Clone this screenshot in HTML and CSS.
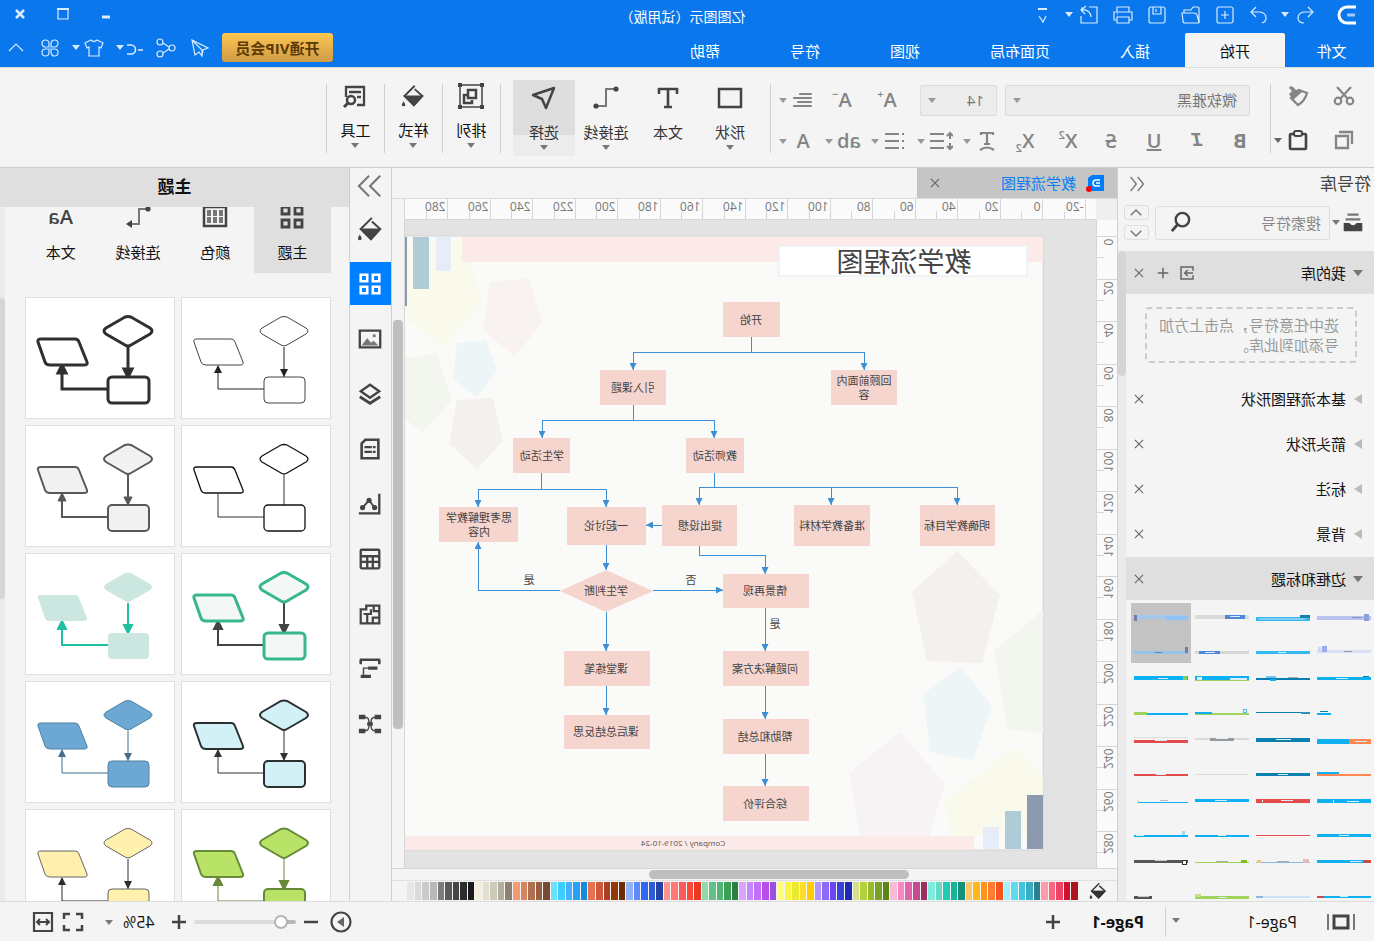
FILE: index.html
```html
<!DOCTYPE html>
<html lang="zh-CN">
<head>
<meta charset="utf-8">
<title>亿图图示</title>
<link rel="stylesheet" href="styles.css">
</head>
<body>
<svg class="defs" aria-hidden="true">
  <symbol id="caret" viewBox="0 0 8 5"><path d="M0 0h8L4 5z" fill="currentColor"/></symbol>
  <symbol id="undo" viewBox="0 0 24 24"><path d="M9 4 4 9l5 5M4 9h9q6 1 6 6t-6 5"/></symbol>
  <symbol id="redo" viewBox="0 0 24 24"><path d="M15 4l5 5-5 5M20 9h-9q-6 1-6 6 0 4 4 5"/></symbol>
  <symbol id="new" viewBox="0 0 24 24"><rect x="4" y="4" width="16" height="16" rx="2"/><path d="M12 8v8M8 12h8"/></symbol>
  <symbol id="open" viewBox="0 0 24 24"><path d="M4 18V6q0-2 2-2h4l2 3h7v3M4 19l2-7q1-2 3-2h12l-1 8q0 2-2 2H5q-2 0-1-3"/></symbol>
  <symbol id="save" viewBox="0 0 24 24"><rect x="4" y="4" width="16" height="16" rx="2"/><path d="M8 4v7h8V4M13 6v3"/></symbol>
  <symbol id="print" viewBox="0 0 24 24"><path d="M6 9V4h12v5M6 17H3V9h18v8h-3M6 14h12v6H6zM17 11h1"/></symbol>
  <symbol id="export" viewBox="0 0 24 24"><path d="M12 4H4v16h16v-7M20 5h-4M10 14q1-8 9-7M15 3l5 4-4 4"/></symbol>
  <symbol id="more" viewBox="0 0 24 24"><path d="M8 6h9" stroke-width="2"/><path d="M9 13l3 6 4-6"/></symbol>
  <symbol id="send" viewBox="0 0 24 24"><path d="M20 4 4 12l5 2 1 6 3-4 4 3zM10 19v-5L19 5"/></symbol>
  <symbol id="share" viewBox="0 0 24 24"><circle cx="6" cy="12" r="3"/><circle cx="18" cy="6" r="3"/><circle cx="18" cy="18" r="3"/><path d="M9 11l6-4M9 13l6 4"/></symbol>
  <symbol id="link" viewBox="0 0 18 24"><path d="M1 14h5M17 9h-4a4 4 0 0 0 0 9h4" stroke-width="1.600"/></symbol>
  <symbol id="shirt" viewBox="0 0 24 24"><path d="M9 4q3 3 6 0l6 3-2 5-2-1v9H7v-9l-2 1-2-5z"/></symbol>
  <symbol id="clover" viewBox="0 0 24 24"><path d="M11 11H7.500a3.500 3.500 0 1 1 3.500-3.500zM13 11V7.500a3.500 3.500 0 1 1 3.500 3.500zM11 13v3.500A3.500 3.500 0 1 1 7.500 13zM13 13h3.500a3.500 3.500 0 1 1-3.500 3.500z"/></symbol>
  <symbol id="up" viewBox="0 0 24 24"><path d="M5 15l7-7 7 7"/></symbol>
  <symbol id="down" viewBox="0 0 24 24"><path d="M5 9l7 7 7-7"/></symbol>
  <symbol id="close" viewBox="0 0 24 24"><path d="M5 5l14 14M19 5 5 19"/></symbol>
  <symbol id="plus" viewBox="0 0 24 24"><path d="M12 5v14M5 12h14"/></symbol>
  <symbol id="minus" viewBox="0 0 24 24"><path d="M5 12h14"/></symbol>
  <symbol id="cut" viewBox="0 0 24 24"><g stroke-width="2.200"><path d="M5 3l11 12M19 3 8 15"/><circle cx="6" cy="17" r="3.300"/><circle cx="18" cy="17" r="3.300"/></g></symbol>
  <symbol id="brush" viewBox="0 0 24 24"><path d="M3 9l8-3 8 8-7 7q-7-4-9-12z" stroke-width="2.300"/><path d="M8 8l9 8 4-6-3-3 3-3q-1-3-4-1l-3 3-3-1z" fill="currentColor" stroke="none"/></symbol>
  <symbol id="copy" viewBox="0 0 24 24"><path d="M8 8h12v12H8zM4 16V4h13" stroke-width="2.300"/></symbol>
  <symbol id="paste" viewBox="0 0 24 24"><rect x="4" y="6" width="16" height="15" rx="1" stroke-width="2.600"/><rect x="8" y="3" width="8" height="5" rx="2" fill="#f4f4f4" stroke-width="2"/></symbol>
  <symbol id="align" viewBox="0 0 24 24"><path d="M4 6h11M4 10h17M4 14h13M4 18h17" stroke-width="2.200" stroke-linecap="round"/></symbol>
  <symbol id="tarc" viewBox="0 0 24 24"><path d="M6 6V4h12v2M12 4v11M9 15h6M5 21q7-5 14 0" stroke-width="2.200"/></symbol>
  <symbol id="spacing" viewBox="0 0 24 24"><path d="M3 4v6M0 7l3-3 3 3M3 20v-6M0 17l3 3 3-3M9 5h14M9 12h14M9 19h14" stroke-width="2"/></symbol>
  <symbol id="list" viewBox="0 0 24 24"><path d="M3 5h2M3 12h2M3 19h2M8 5h14M8 12h14M8 19h14" stroke-width="2.200"/></symbol>
  <symbol id="rect" viewBox="0 0 28 28"><path d="M3 5h22v18H3z" stroke-width="2.500"/></symbol>
  <symbol id="tee" viewBox="0 0 28 28"><path d="M5 10V5h18v5M14 5v18M10 23h8" stroke-width="2.600"/></symbol>
  <symbol id="connector" viewBox="0 0 28 28"><path d="M4 5h10v17h11" stroke="#777" stroke-width="2"/><circle cx="4" cy="5" r="2.600" fill="currentColor" stroke="none"/><circle cx="24" cy="22" r="2.600" fill="currentColor" stroke="none"/></symbol>
  <symbol id="pointer" viewBox="0 0 28 28"><path d="M4 4l21 7-9 4-4 9z" stroke-width="2.500" stroke-linejoin="round"/></symbol>
  <symbol id="arrange" viewBox="0 0 28 28"><path d="M3 3h22v22H3z" stroke-width="1.500"/><path d="M9 8h8v8H9zM18 13h3v8h-8v-3" stroke-width="2.500"/><path d="M1 1h4v4H1zM23 1h4v4h-4zM1 23h4v4H1zM23 23h4v4h-4z" fill="currentColor" stroke="none"/></symbol>
  <symbol id="bucket" viewBox="0 0 28 28"><path d="M12 2l12 12-11 11L3 14 12 6" stroke-width="2.200"/><path d="M3 14h21L13 25z" fill="currentColor"/><path d="M25 20q4 6 0 6t0-6z" fill="currentColor" stroke="none"/></symbol>
  <symbol id="tools" viewBox="0 0 28 28"><path d="M12 23H5V5h18v10M8 10h12M8 15h4" stroke-width="2.300"/><circle cx="18" cy="18" r="4" stroke-width="2.500"/><path d="M21 21l4 4" stroke-width="3"/></symbol>
  <symbol id="library" viewBox="0 0 28 28"><path d="M8 5h12M6 10h16" stroke="#777" stroke-width="2.500"/><path d="M4 14h6q4 5 8 0h6v9H4z" fill="currentColor" stroke="none"/></symbol>
  <symbol id="search" viewBox="0 0 24 24"><circle cx="10" cy="9" r="7" stroke-width="2.500"/><path d="M15 14l6 7" stroke-width="3"/></symbol>
  <symbol id="import" viewBox="0 0 24 24"><path d="M4 9V4h16v16H4v-5" stroke-width="2"/><path d="M4 12h11M11 8l4 4-4 4" stroke-width="2"/></symbol>
  <symbol id="dleft" viewBox="0 0 28 28"><path d="M13 4 5 14l8 10M23 4 15 14l8 10"/></symbol>
  <symbol id="dright" viewBox="0 0 28 28"><path d="M3 3l11 11L3 25M15 3l11 11-11 11"/></symbol>
  <symbol id="grid" viewBox="0 0 28 28"><path d="M4 4h7v7H4zM17 9V4h7v7h-7V8M4 17h7v7H4zM17 17h7v7h-7z" stroke-width="2.800"/></symbol>
  <symbol id="picture" viewBox="0 0 28 28"><path d="M3 5h22v18H3z" stroke-width="2.500"/><path d="M5 21l5-5 3 2 4-5 6 8z" fill="#777" stroke="none"/><path d="M8 9h3v3H8z" fill="#777" stroke="none"/></symbol>
  <symbol id="layers" viewBox="0 0 28 28"><path d="M14 4l10 7-10 7-10-7z" stroke-width="2.500"/><path d="M3 17l11 7 11-7" stroke-width="3"/></symbol>
  <symbol id="doc" viewBox="0 0 28 28"><path d="M5 4h14l4 4v16H5z" stroke-width="2.800"/><path d="M8 12h3M12 12h8M8 17h3M12 17h8" stroke-width="2.400"/></symbol>
  <symbol id="chart" viewBox="0 0 28 28"><path d="M4 3v21h22" stroke-width="2.500"/><path d="M9 18l6-8 7 8" stroke-width="2"/><g fill="currentColor" stroke="none"><circle cx="9" cy="18" r="2.800"/><circle cx="15" cy="10" r="2.800"/><circle cx="22" cy="18" r="2.800"/></g></symbol>
  <symbol id="table" viewBox="0 0 28 28"><rect x="4" y="4" width="20" height="20" rx="1" stroke-width="2.500"/><path d="M4 11h20M4 17h20M11 11v13M17 11v13" stroke-width="2.500"/></symbol>
  <symbol id="plan" viewBox="0 0 28 28"><path d="M4 5h14v4h6v15H4zM4 11h6V5M4 18h7v6M13 9v5h8M17 14v9" stroke-width="2.400"/></symbol>
  <symbol id="gantt" viewBox="0 0 28 28"><path d="M3 4h22M4 4v5M24 4v5" stroke-width="2.800"/><path d="M6 13h10M13 22h11" stroke-width="3.500"/><path d="M15 13h6v9" stroke-width="1.500"/></symbol>
  <symbol id="mind" viewBox="0 0 28 28"><path d="M7 7h3q3 0 3 7t-3 7H7M21 7h-3q-3 0-3 7t3 7h3" stroke-width="1.500"/><path d="M2 4h7v5H2zM19 4h7v5h-7zM2 19h7v5H2zM19 19h7v5h-7zM11 12h6v4h-6z" fill="currentColor" stroke="none"/></symbol>
  <symbol id="palette" viewBox="0 0 28 28"><path d="M3 4h22v19H3z" stroke-width="2.500"/><path d="M6 7h4v6H6zM12 7h4v6h-4zM18 7h4v6h-4zM6 14h4v6H6zM12 14h4v6h-4zM18 14h4v6h-4z" fill="#777" stroke="none"/></symbol>
  <symbol id="conarrow" viewBox="0 0 28 28"><path d="M4 6h9v15h7" stroke="#777" stroke-width="2"/><circle cx="4" cy="6" r="2.600" fill="currentColor" stroke="none"/><path d="M20 17l6 4-6 4z" fill="currentColor" stroke="none"/></symbol>
  <symbol id="pages" viewBox="0 0 28 24"><path d="M7 6h14v12H7z" stroke-width="3"/><path d="M1 4v16M27 4v16" stroke="#777" stroke-width="2"/></symbol>
  <symbol id="play" viewBox="0 0 24 24"><circle cx="12" cy="12" r="9.500" stroke-width="2.200"/><path d="M9 7l7 5-7 5z" fill="#666" stroke="none"/></symbol>
  <symbol id="full" viewBox="0 0 24 24"><path d="M3 9V4h6M15 4h6v5M21 15v5h-6M9 20H3v-5" stroke-width="2.500"/></symbol>
  <symbol id="fit" viewBox="0 0 24 24"><path d="M3 3h18v18H3z" stroke-width="2.200"/><path d="M7 12h10M9 9l-3 3 3 3M15 9l3 3-3 3" stroke-width="2"/></symbol>
  <symbol id="flow" viewBox="0 0 148 120">
    <path class="flow-line" d="M46 49v30M66 91h46V68"/>
    <path class="flow-head" d="M46 79l-4-8h8zM112 67l-4 8h8z"/>
    <g class="flow-shape">
      <path d="M43 19q3-1 6 0l19 11q4 3 0 6L49 47q-3 2-6 0L24 36q-4-3 0-6z"/>
      <path d="M99 41h34q4 0 3 3l-7 20q-1 3-5 3H90q-4 0-3-3l8-20q1-3 4-3z"/>
      <rect x="25" y="79" width="41" height="26" rx="4"/>
    </g>
  </symbol>
</svg>

<div class="app">
  <header class="top">
    <div class="titlebar">
      <div class="quick">
        <svg class="logo" viewBox="0 0 20 20"><path d="M1 2h9a8 8 0 0 1 0 16H1" stroke-width="3"/><path d="M2 10h8" stroke="#9ecbff" stroke-width="3"/></svg>
        <button class="tool" aria-label="撤销"><svg><use href="#undo"/></svg><svg class="caret"><use href="#caret"/></svg></button>
        <button class="tool" aria-label="重做"><svg><use href="#redo"/></svg></button>
        <button class="tool" aria-label="新建"><svg><use href="#new"/></svg></button>
        <button class="tool" aria-label="打开"><svg><use href="#open"/></svg></button>
        <button class="tool" aria-label="保存"><svg><use href="#save"/></svg></button>
        <button class="tool" aria-label="打印"><svg><use href="#print"/></svg></button>
        <button class="tool" aria-label="导出"><svg><use href="#export"/></svg><svg class="caret"><use href="#caret"/></svg></button>
        <button class="tool" aria-label="更多"><svg><use href="#more"/></svg></button>
      </div>
      <div class="title">亿图图示（试用版）</div>
      <div class="window">
        <button class="tool" aria-label="最小化"><svg viewBox="0 0 24 24"><path d="M8 15h8" stroke-width="3"/></svg></button>
        <button class="tool" aria-label="最大化"><svg viewBox="0 0 24 24"><path d="M7 7h10v10H7z"/><path d="M6 7h12" stroke-width="2"/></svg></button>
        <button class="tool" aria-label="关闭"><svg viewBox="0 0 24 24"><path d="M8 8l8 8M16 8l-8 8" stroke-width="2.500"/></svg></button>
      </div>
    </div>
    <nav class="tabs">
      <button class="tab tab-file">文件</button>
      <button class="tab tab-active">开始</button>
      <button class="tab">插入</button>
      <button class="tab tab-wide">页面布局</button>
      <button class="tab">视图</button>
      <button class="tab">符号</button>
      <button class="tab">帮助</button>
      <div class="account">
        <button class="vip">开通VIP会员</button>
        <button class="tool" aria-label="发送"><svg><use href="#send"/></svg></button>
        <button class="tool" aria-label="分享"><svg><use href="#share"/></svg></button>
        <button class="tool" aria-label="账号"><svg class="slim"><use href="#link"/></svg><svg class="caret"><use href="#caret"/></svg></button>
        <button class="tool" aria-label="皮肤"><svg><use href="#shirt"/></svg><svg class="caret"><use href="#caret"/></svg></button>
        <button class="tool" aria-label="应用"><svg><use href="#clover"/></svg></button>
        <button class="tool" aria-label="收起"><svg><use href="#up"/></svg></button>
      </div>
    </nav>
  </header>

  <section class="ribbon">
    <div class="clipboard">
      <button class="tool" aria-label="剪切"><svg><use href="#cut"/></svg></button>
      <button class="tool" aria-label="格式刷"><svg><use href="#brush"/></svg></button>
      <button class="tool" aria-label="复制"><svg><use href="#copy"/></svg></button>
      <button class="tool dark" aria-label="粘贴"><svg><use href="#paste"/></svg><svg class="caret"><use href="#caret"/></svg></button>
    </div>
    <i class="sep"></i>
    <div class="fonts">
      <div class="font-row">
        <span class="combo combo-font"><select aria-label="字体"><option>微软雅黑</option></select><svg class="caret"><use href="#caret"/></svg></span>
        <span class="combo combo-size"><select aria-label="字号"><option>14</option></select><svg class="caret"><use href="#caret"/></svg></span>
        <div class="sizes">
          <button class="tool glyph" aria-label="增大字号">A<sup>+</sup></button>
          <button class="tool glyph" aria-label="减小字号">A<sup>−</sup></button>
        </div>
        <button class="tool" aria-label="对齐"><svg><use href="#align"/></svg><svg class="caret"><use href="#caret"/></svg></button>
      </div>
      <div class="font-row">
        <div class="styles">
          <button class="tool glyph bold">B</button>
          <button class="tool glyph italic">I</button>
          <button class="tool glyph under">U</button>
          <button class="tool glyph strike">S</button>
          <button class="tool glyph">X<sup>2</sup></button>
          <button class="tool glyph">X<sub>2</sub></button>
        </div>
        <div class="para">
          <button class="tool" aria-label="文字方向"><svg><use href="#tarc"/></svg><svg class="caret"><use href="#caret"/></svg></button>
          <button class="tool" aria-label="行距"><svg><use href="#spacing"/></svg><svg class="caret"><use href="#caret"/></svg></button>
          <button class="tool" aria-label="列表"><svg><use href="#list"/></svg><svg class="caret"><use href="#caret"/></svg></button>
          <button class="tool glyph"><span class="ab">ab</span><svg class="caret"><use href="#caret"/></svg></button>
          <button class="tool glyph"><span class="ab">A</span><svg class="caret"><use href="#caret"/></svg></button>
        </div>
      </div>
    </div>
    <i class="sep"></i>
    <div class="shapes">
      <button class="big"><svg><use href="#rect"/></svg>形状<svg class="caret"><use href="#caret"/></svg></button>
      <button class="big"><svg><use href="#tee"/></svg>文本</button>
      <button class="big"><svg><use href="#connector"/></svg>连接线<svg class="caret"><use href="#caret"/></svg></button>
      <button class="big big-active"><svg><use href="#pointer"/></svg>选择<svg class="caret"><use href="#caret"/></svg></button>
    </div>
    <i class="sep"></i>
    <button class="big big-narrow"><svg><use href="#arrange"/></svg>排列<svg class="caret"><use href="#caret"/></svg></button>
    <i class="sep"></i>
    <button class="big big-narrow"><svg class="small"><use href="#bucket"/></svg>样式<svg class="caret"><use href="#caret"/></svg></button>
    <i class="sep"></i>
    <button class="big big-narrow"><svg><use href="#tools"/></svg>工具<svg class="caret"><use href="#caret"/></svg></button>
    <i class="sep"></i>
  </section>

  <main class="work">
    <aside class="library">
      <div class="lib-head"><span>符号库</span><button class="tool" aria-label="收起"><svg><use href="#dleft"/></svg></button></div>
      <div class="lib-search">
        <button class="tool dark" aria-label="符号库菜单"><svg><use href="#library"/></svg><svg class="caret"><use href="#caret"/></svg></button>
        <label class="search"><input type="text" placeholder="搜索符号" aria-label="搜索符号"><svg><use href="#search"/></svg></label>
        <div class="steps">
          <button aria-label="上一个"><svg><use href="#up"/></svg></button>
          <button aria-label="下一个"><svg><use href="#down"/></svg></button>
        </div>
      </div>
      <div class="lib-body">
        <div class="lib-list">
          <div class="group group-open"><svg class="tri"><use href="#caret"/></svg><span>我的库</span>
            <button class="mini" aria-label="导入"><svg><use href="#import"/></svg></button>
            <button class="mini" aria-label="添加"><svg><use href="#plus"/></svg></button>
            <button class="mini" aria-label="关闭"><svg><use href="#close"/></svg></button></div>
          <div class="drop">选中任意符号，点击上方加<br>号添加到此库。</div>
          <div class="group"><svg class="tri" viewBox="0 0 10 10"><path d="M1 0l8 5-8 5z"/></svg><span>基本流程图形状</span><button class="mini" aria-label="关闭"><svg><use href="#close"/></svg></button></div>
          <div class="group"><svg class="tri" viewBox="0 0 10 10"><path d="M1 0l8 5-8 5z"/></svg><span>箭头形状</span><button class="mini" aria-label="关闭"><svg><use href="#close"/></svg></button></div>
          <div class="group"><svg class="tri" viewBox="0 0 10 10"><path d="M1 0l8 5-8 5z"/></svg><span>标注</span><button class="mini" aria-label="关闭"><svg><use href="#close"/></svg></button></div>
          <div class="group"><svg class="tri" viewBox="0 0 10 10"><path d="M1 0l8 5-8 5z"/></svg><span>背景</span><button class="mini" aria-label="关闭"><svg><use href="#close"/></svg></button></div>
          <div class="group group-open"><svg class="tri"><use href="#caret"/></svg><span>边框和标题</span><button class="mini" aria-label="关闭"><svg><use href="#close"/></svg></button></div>
          <div class="frames" id="frames"></div>
        </div>
        <div class="lib-scroll"><i></i></div>
      </div>
    </aside>

    <section class="editor">
      <div class="doctabs">
        <div class="doctab">
          <svg class="docicon" viewBox="0 0 20 20"><path d="M1 2h12l4 3v13H1z" fill="#007dff"/><path d="M5 7h4a3 3 0 0 1 0 6H5M5 10h4" stroke="#fff" stroke-width="1.500"/><circle cx="16" cy="16" r="3" fill="#f00"/></svg>
          <span>教学流程图</span>
          <button class="mini" aria-label="关闭"><svg><use href="#close"/></svg></button>
        </div>
      </div>
      <div class="stage">
        <div class="corner"></div>
        <svg class="ruler ruler-x" id="ruler-x"></svg>
        <div class="vscroll"><i></i></div>
        <svg class="ruler ruler-y" id="ruler-y"></svg>
        <svg class="canvas">
          <defs><marker id="head" viewBox="0 0 6 6" refX="6" refY="3" markerWidth="7" markerHeight="7" orient="auto" markerUnits="userSpaceOnUse"><path d="M0 0v6l6-3z" fill="#3c8fd3"/></marker></defs>
          <rect class="sheet" x="53" y="16" width="640" height="614"/>
          <path fill="#f9f9ec" d="M684 20H630L614 82 652 127 691 98V40zM81 526L53 555V616H145L151 581z"/>
          <path fill="#f8f3f2" d="M606 62L567 58 554 103 581 136 613 111z"/>
          <path fill="#edf5f7" d="M639 123L610 120 599 151 619 177 643 159zM135 447L104 486 123 540 166 532 173 474z"/>
          <path fill="#f3f6ee" d="M691 138L659 134 644 180 673 212 691 199zM53 390L102 431 89 509 53 513z"/>
          <path fill="#f4f0ee" d="M639 180L603 178 593 221 619 249 647 224zM139 331L96 375 114 443 169 441 184 372z"/>
          <path fill="#f7f3f5" d="M196 512L151 564 167 616H236L247 553z"/>
          <path fill="#fbeae8" d="M53 17H634V42H53zM122 616H691V630H122z"/>
          <path fill="#e6edf8" d="M645 17h15v34h-15zM97 607h16v22H97z"/>
          <path fill="#b0cbd8" d="M667 17h16v52h-16zM75 591h16v38H75z"/>
          <path fill="#8c9ab0" d="M689 17h3v69h-3zM53 575h16v54H53z"/>
          <rect x="69" y="26" width="248" height="30" fill="#fff" stroke="#e6f1ee"/>
          <text class="heading" x="192" y="52">教学流程图</text>
          <text class="footer" x="413" y="626">Company / 2019-10-24</text>
          <g class="links">
            <path class="stem" d="M345 117V132"/><path d="M345 132H232V150"/><path d="M345 132H463V150"/>
            <path d="M463 185V200H554V218"/><path d="M463 200H382V218"/>
            <path d="M555 253V269H618V287"/><path d="M555 269H490V287"/>
            <path d="M382 253V267H397V285"/><path d="M382 267H265V285"/><path d="M265 267H139V285"/>
            <path d="M434 305H450"/><path d="M397 326V335H331V354"/><path d="M490 325V350"/>
            <path d="M443 370H373"/><path d="M536 370H618V322"/>
            <path d="M490 392V431"/><path d="M490 466V495"/>
            <path d="M331 388V431"/><path d="M331 466V499"/><path d="M331 534V566"/>
          </g>
          <g class="nodes">
            <rect x="316" y="82" width="57" height="35"/><rect x="199" y="150" width="66" height="35"/><rect x="430" y="150" width="66" height="35"/>
            <rect x="352" y="218" width="58" height="35"/><rect x="526" y="218" width="57" height="35"/>
            <rect x="101" y="285" width="75" height="41"/><rect x="226" y="285" width="76" height="41"/><rect x="359" y="285" width="75" height="41"/>
            <rect x="450" y="287" width="79" height="38"/><rect x="578" y="287" width="79" height="35"/>
            <rect x="287" y="354" width="86" height="34"/><path d="M443 371L490 350 536 371 490 392z"/>
            <rect x="287" y="431" width="86" height="35"/><rect x="446" y="431" width="86" height="35"/>
            <rect x="287" y="499" width="86" height="35"/><rect x="446" y="495" width="86" height="34"/><rect x="287" y="566" width="86" height="35"/>
          </g>
          <g class="labels">
            <text x="345" y="104">开始</text><text x="232" y="165">回顾前面内</text><text x="232" y="179">容</text><text x="463" y="172">引入课题</text>
            <text x="381" y="240">教师活动</text><text x="554" y="240">学生活动</text>
            <text x="139" y="310">明确教学目标</text><text x="264" y="310">准备教学材料</text><text x="396" y="310">提出设想</text>
            <text x="490" y="310">一起讨论</text><text x="617" y="302">思考理解教学</text><text x="617" y="316">内容</text>
            <text x="331" y="375">情景再现</text><text x="490" y="375">学生判断</text>
            <text x="331" y="453">问题解决方案</text><text x="490" y="453">课堂练笔</text>
            <text x="331" y="521">帮助和总结</text><text x="490" y="516">课后总结反思</text><text x="331" y="588">综合评价</text>
            <text x="567" y="364">是</text><text x="405" y="364">否</text><text x="321" y="408">是</text>
          </g>
        </svg>
      </div>
      <div class="hscroll"><i></i></div>
      <div class="colors"><svg class="bucket"><use href="#bucket"/></svg><div class="swatches" id="swatches"></div></div>
    </section>

    <nav class="rail">
      <button class="rail-top" aria-label="展开"><svg><use href="#dright"/></svg></button>
      <button aria-label="填充"><svg><use href="#bucket"/></svg></button>
      <button class="rail-active" aria-label="主题"><svg><use href="#grid"/></svg></button>
      <button aria-label="图片"><svg><use href="#picture"/></svg></button>
      <button aria-label="图层"><svg><use href="#layers"/></svg></button>
      <button aria-label="备注"><svg><use href="#doc"/></svg></button>
      <button aria-label="图表"><svg><use href="#chart"/></svg></button>
      <button aria-label="表格"><svg><use href="#table"/></svg></button>
      <button aria-label="平面图"><svg><use href="#plan"/></svg></button>
      <button aria-label="甘特图"><svg><use href="#gantt"/></svg></button>
      <button aria-label="思维导图"><svg><use href="#mind"/></svg></button>
    </nav>

    <aside class="themes">
      <h2>主题</h2>
      <div class="theme-body">
        <div class="theme-main">
          <div class="theme-tabs">
            <button class="on"><svg><use href="#grid"/></svg>主题</button>
            <button><svg><use href="#palette"/></svg>颜色</button>
            <button><svg><use href="#conarrow"/></svg>连接线</button>
            <button><b>Aa</b>文本</button>
          </div>
          <div class="cards">
            <button class="card thin" aria-label="细线"><svg viewBox="0 0 148 120"><use href="#flow"/></svg></button>
            <button class="card thick" aria-label="粗线"><svg viewBox="0 0 148 120"><use href="#flow"/></svg></button>
            <button class="card plain" aria-label="无箭头"><svg viewBox="0 0 148 120"><use href="#flow"/></svg></button>
            <button class="card gray" aria-label="灰色"><svg viewBox="0 0 148 120"><use href="#flow"/></svg></button>
            <button class="card green" aria-label="绿色描边"><svg viewBox="0 0 148 120"><use href="#flow"/></svg></button>
            <button class="card mint" aria-label="薄荷"><svg viewBox="0 0 148 120"><use href="#flow"/></svg></button>
            <button class="card ice" aria-label="浅蓝"><svg viewBox="0 0 148 120"><use href="#flow"/></svg></button>
            <button class="card blue" aria-label="蓝色"><svg viewBox="0 0 148 120"><use href="#flow"/></svg></button>
            <button class="card lime" aria-label="青柠"><svg viewBox="0 0 148 120"><use href="#flow"/></svg></button>
            <button class="card yellow" aria-label="黄色"><svg viewBox="0 0 148 120"><use href="#flow"/></svg></button>
          </div>
        </div>
        <div class="theme-scroll"><i></i></div>
      </div>
    </aside>
  </main>

  <footer class="status">
    <button class="tool dark" aria-label="页面视图"><svg class="wide"><use href="#pages"/></svg></button>
    <span class="pagesel"><select aria-label="页面"><option>Page-1</option></select><svg class="caret"><use href="#caret"/></svg></span>
    <button class="page">Page-1</button>
    <button class="tool dark" aria-label="添加页面"><svg class="thick-icon"><use href="#plus"/></svg></button>
    <div class="zoom">
      <button class="tool dark" aria-label="播放"><svg><use href="#play"/></svg></button>
      <button class="tool dark" aria-label="缩小"><svg class="thick-icon"><use href="#minus"/></svg></button>
      <input type="range" min="0" max="100" value="8" aria-label="缩放">
      <button class="tool dark" aria-label="放大"><svg class="thick-icon"><use href="#plus"/></svg></button>
      <button class="percent">45%<svg class="caret"><use href="#caret"/></svg></button>
      <button class="tool dark" aria-label="全屏"><svg><use href="#full"/></svg></button>
      <button class="tool dark" aria-label="适应宽度"><svg><use href="#fit"/></svg></button>
    </div>
  </footer>
</div>
<script src="app.js"></script>
</body>
</html>
```

FILE: styles.css
```css
* { box-sizing: border-box; }

body {
  margin: 0;
  font-family: "Open Sans", "Noto Sans CJK SC", sans-serif;
  font-size: 15px;
  line-height: 20px;
  color: #222;
}

button, select, input {
  margin: 0;
  padding: 0;
  border: 0;
  background: none;
  font: inherit;
  color: inherit;
}

svg {
  display: block;
  fill: none;
  stroke: currentColor;
  stroke-width: 1.2;
  flex: none;
}

text { stroke: none; }
.defs { position: absolute; width: 0; height: 0; }

/* The interface runs in a right-to-left mirror. */
.app {
  display: flex;
  flex-direction: column;
  height: 100vh;
  min-width: 1200px;
  overflow: hidden;
  background: #f4f4f4;
  transform: scaleX(-1);
}

.caret { width: 8px; height: 5px; stroke: none; }

.tool {
  display: flex;
  align-items: center;
  gap: 4px;
  height: 24px;
}
.tool > svg:not(.caret) { width: 24px; height: 24px; }
.dark { color: #444; }
.dark .caret { color: #777; }

/* title bar and tabs */
.top { background: #0a77ec; color: #d9ebff; }

.titlebar { display: flex; align-items: center; height: 33px; }
.logo { width: 20px; height: 20px; margin-right: 10px; color: #fff; }
.quick { display: flex; align-items: center; gap: 10px; flex: 1; padding: 0 0 4px 17px; }
.title { flex: none; font-size: 14px; color: #fff; }
.window { display: flex; justify-content: flex-end; gap: 19px; flex: 1; padding: 0 8px 6px 0; }

.tabs { display: flex; height: 34px; }
.tab { width: 100px; color: #fff; padding-top: 2px; }
.tab-file { width: 89px; padding-right: 4px; }
.tab-wide { width: 130px; }
.tab-active { background: #f4f4f4; color: #111; border-radius: 2px 2px 0 0; }

.account { display: flex; align-items: center; gap: 10px; margin-left: auto; padding: 0 4px 5px 0; }
.account .tool { gap: 2px; }
.account .tool > .slim { width: 18px; }
.vip {
  width: 111px;
  height: 29px;
  border-radius: 3px;
  background: linear-gradient(#fcc650, #cf9b46);
  color: #5d3b06;
  font-weight: bold;
  font-size: 15px;
}

/* ribbon */
.ribbon {
  display: flex;
  height: 101px;
  padding-top: 12px;
  border-top: 1px solid #dcdcdc;
  border-bottom: 1px solid #cfcfcf;
  color: #858585;
  flex: none;
}
.ribbon .caret { color: #999; }
.sep { width: 1px; height: 69px; margin-top: 4px; background: #cfcfcf; flex: none; }

.clipboard {
  display: grid;
  grid-template-columns: 46px 47px;
  grid-template-rows: 44px 24px;
  padding: 4px 0 0 10px;
  align-content: start;
}
.clipboard .tool { padding-left: 8px; }
.clipboard .dark .caret { color: #666; }

.fonts { padding: 4px 8px 0 18px; }
.font-row { display: flex; align-items: center; height: 32px; }
.font-row + .font-row { height: 24px; margin-top: 13px; }
.combo {
  position: relative;
  height: 31px;
  margin-left: 2px;
  border: 1px solid #dcdcdc;
  border-radius: 2px;
  background: #ececec;
}
.combo select { appearance: none; width: 100%; height: 29px; padding-left: 12px; font-size: 15px; color: #777; }
.combo .caret { position: absolute; right: 7px; top: 12px; }
.combo-font { width: 245px; }
.combo-size { width: 77px; margin-left: 8px; }
.sizes { display: flex; gap: 21px; margin: 0 15px 0 21px; }
.styles { display: flex; gap: 19px; margin: 0 14px 0 0; }
.para { display: flex; gap: 10px; }
.glyph { min-width: 24px; justify-content: center; font-size: 20px; font-weight: 600; gap: 0; }
.glyph .caret { margin-left: 4px; }
.glyph sup, .glyph sub { font-size: 11px; line-height: 11px; }
.glyph sup { align-self: flex-start; }
.glyph sub { align-self: flex-end; }
.ab { width: 24px; text-align: center; }
.bold { font-weight: bold; }
.italic { font-family: "Liberation Mono", monospace; font-style: italic; font-weight: bold; }
.under { text-decoration: underline; }
.strike { text-decoration: line-through; }

.shapes { display: flex; padding: 0 12px 0 9px; }
.big {
  display: flex;
  flex-direction: column;
  align-items: center;
  width: 62px;
  height: 76px;
  padding-top: 4px;
  color: #333;
}
.big > svg:not(.caret) { width: 28px; height: 28px; margin-bottom: 10px; color: #444; }
.big > .small { padding: 2px; }
.big .caret { margin-top: 3px; color: #777; }
.big-narrow { width: 57px; padding-top: 2px; color: #111; }
.big-active { background: linear-gradient(#dedede 55px, #ececec 55px); border-radius: 2px; }

/* symbol library */
.work { display: flex; flex: 1; min-height: 0; }

.library { display: flex; flex-direction: column; width: 257px; border-right: 1px solid #cfcfcf; flex: none; }
.lib-head {
  display: flex;
  align-items: center;
  justify-content: space-between;
  height: 37px;
  padding: 0 9px 6px 3px;
  font-size: 17px;
  color: #444;
}
.lib-head .tool > svg { width: 20px; height: 20px; color: #777; stroke-width: 2; }
.lib-search { display: flex; align-items: center; height: 35px; padding-left: 8px; margin-bottom: 10px; }
.lib-search .tool { width: 36px; gap: 0; }
.lib-search .tool > svg:not(.caret) { width: 26px; height: 26px; }
.search { display: flex; align-items: center; width: 175px; height: 34px; border: 1px solid #dedede; border-radius: 3px; padding: 0 13px 0 8px; }
.search input { flex: 1; min-width: 0; outline: 0; }
.search input::placeholder { color: #888; opacity: 1; }
.search svg { width: 23px; height: 23px; color: #444; }
.steps { display: grid; gap: 5px; margin-left: 6px; }
.steps button { display: flex; justify-content: center; align-items: center; width: 25px; height: 15px; border: 1px solid #dedede; border-radius: 3px; color: #777; }
.steps svg { width: 18px; height: 18px; stroke-width: 2; }

.lib-body { display: flex; flex: 1; min-height: 0; }
.lib-list { flex: 1; overflow: hidden; }
.group { display: flex; align-items: center; height: 45px; padding: 0 5px 0 11px; color: #111; }
.group span { flex: 1; padding-left: 7px; }
.group-open { height: 43px; background: #dfdfdf; margin: 1px 0; }
.tri { width: 10px; height: 10px; color: #bbb; fill: currentColor; stroke: none; }
.group-open .tri { color: #777; }
.mini { display: flex; align-items: center; justify-content: center; width: 16px; height: 16px; margin-left: 8px; color: #777; }
.mini svg { width: 18px; height: 18px; stroke-width: 2; color: #666; }
.mini:last-child svg { width: 14px; height: 14px; }
.drop {
  margin: 13px 19px 13px 17px;
  padding: 6px 0 6px 16px;
  border: 2px dashed #ccc;
  border-radius: 4px;
  color: #999;
  white-space: nowrap;
}
.frames { display: grid; grid-template-columns: repeat(4, 60px); gap: 1px; padding-top: 2px; }
.frames svg { width: 60px; height: 60px; stroke: none; }
.frames .picked { background: #c3c3c3; }
.lib-scroll { width: 8px; background: #ebebeb; padding-top: 1px; }
.lib-scroll i { display: block; height: 125px; border-radius: 4px; background: #d5d5d5; }

/* editor */
.editor { display: flex; flex-direction: column; flex: 1; min-width: 0; }
.doctabs { height: 31px; border-bottom: 1px solid #dcdcdc; flex: none; }
.doctab { display: flex; align-items: center; width: 200px; height: 30px; padding: 0 10px 0 12px; background: #c5c5c5; color: #0a7ff5; }
.doctab span { flex: 1; padding-left: 9px; }
.docicon { width: 20px; height: 20px; stroke: none; }
.stage {
  display: grid;
  grid-template-columns: 21px minmax(0, 1fr) 13px;
  grid-template-rows: 21px minmax(0, 1fr);
  flex: 1;
  min-height: 0;
}
.corner { background: #efefef; }
.ruler { width: 100%; height: 100%; overflow: visible; background: #fafafa; stroke: #d6d6d6; stroke-width: 1; }
.ruler text { fill: #777; font-size: 12px; }
.ruler-x { border-bottom: 1px solid #d6d6d6; }
.ruler-y { border-right: 1px solid #d6d6d6; }
.canvas { width: 100%; height: 100%; background: #e3e3e3; overflow: hidden; stroke: none; }
.sheet { fill: #fafaf8; stroke: #d4d4d4; stroke-width: 1; }
.links { stroke: #3c8fd3; stroke-width: 1; shape-rendering: crispEdges; }
.links path { marker-end: url(#head); }
.links .stem { marker-end: none; }
.nodes { fill: #f6d5cf; }
.labels text { fill: #444; font-size: 11px; text-anchor: middle; }
.heading { fill: #444; font-size: 27px; text-anchor: middle; }
.footer { fill: #555; font-size: 8px; text-anchor: middle; }
.vscroll { grid-row: 1 / 3; grid-column: 3; border-left: 1px solid #d6d6d6; padding: 121px 1px 0; }
.vscroll i { display: block; height: 409px; border-radius: 4px; background: #bfbfbf; }
.hscroll { height: 13px; border-top: 1px solid #d6d6d6; border-bottom: 1px solid #e0e0e0; padding: 1px 0 0 208px; flex: none; }
.hscroll i { display: block; width: 260px; height: 9px; border-radius: 5px; background: #bfbfbf; }
.colors { display: flex; align-items: center; height: 20px; padding: 0 15px 0 10px; flex: none; }
.bucket { width: 18px; height: 18px; color: #333; margin-right: 11px; }
.swatches { display: flex; gap: 1px; flex: 1; height: 18px; }
.swatches i { flex: 1; }

/* icon rail */
.rail {
  display: flex;
  flex-direction: column;
  gap: 12px;
  width: 43px;
  border-left: 1px solid #cfcfcf;
  border-right: 1px solid #cfcfcf;
  color: #444;
  flex: none;
}
.rail button { display: flex; align-items: center; justify-content: center; height: 43px; flex: none; }
.rail svg { width: 26px; height: 26px; }
.rail .rail-top { height: 36px; margin-bottom: -9px; color: #777; }
.rail-top svg { stroke-width: 2.2; }
.rail .rail-active { background: #0080ff; color: #fff; }

/* themes */
.themes { display: flex; flex-direction: column; width: 349px; flex: none; }
.themes h2 { margin: 0; padding: 9px 0 10px; background: #dfdfdf; font-size: 17px; line-height: 20px; text-align: center; color: #111; flex: none; }
.theme-body { display: flex; flex: 1; min-height: 0; }
.theme-main { flex: 1; padding: 0 20px 0 18px; overflow: hidden; }
.theme-tabs { display: grid; grid-template-columns: repeat(4, 1fr); height: 66px; margin-right: -3px; }
.theme-tabs button { display: flex; flex-direction: column; align-items: center; color: #111; overflow: hidden; }
.theme-tabs svg, .theme-tabs b { width: 28px; height: 28px; margin: -4px 0 11px; color: #444; flex: none; }
.theme-tabs b { font-size: 20px; font-weight: 600; line-height: 28px; }
.theme-tabs .on { background: #dfdfdf; }
.cards { display: grid; grid-template-columns: 1fr 1fr; gap: 6px; margin-top: 24px; }
.card { height: 122px; border: 1px solid #dedede; background: #fff; }
.card svg { width: 100%; height: 120px; }
.flow-shape { fill: var(--fill); stroke: var(--line); stroke-width: var(--weight); }
.flow-line { stroke: var(--link); stroke-width: var(--link-weight); }
.flow-head { fill: var(--tip, var(--link)); stroke: var(--tip, var(--link)); stroke-width: var(--head); }
.thin { --fill: #fff; --line: #444; --weight: 1; --link: #222; --link-weight: 1; --head: 0; }
.thick { --fill: #fff; --line: #303030; --weight: 3; --link: #303030; --link-weight: 3; --head: 3; }
.plain { --fill: #fff; --line: #111; --weight: 1.3; --link: #333; --link-weight: 1; --head: 0; --tip: none; }
.gray { --fill: #f1f1f1; --line: #585858; --weight: 2; --link: #585858; --link-weight: 2; --head: 1; }
.green { --fill: #f3f8f7; --line: #37b68f; --weight: 3; --link: #444; --link-weight: 2; --head: 2; }
.mint { --fill: #cce7df; --line: none; --weight: 0; --link: #1fc0a0; --link-weight: 2; --head: 2; }
.ice { --fill: #d1f1f6; --line: #2a2f31; --weight: 2; --link: #333; --link-weight: 1; --head: 0; }
.blue { --fill: #6da8d5; --line: #51829f; --weight: 1; --link: #456e8c; --link-weight: 1; --head: 0; }
.lime { --fill: #b8e367; --line: #678a38; --weight: 2; --link: #678a38; --link-weight: 1; --head: 2; }
.yellow { --fill: #fff0ad; --line: #666; --weight: 1; --link: #2d2d2d; --link-weight: 1; --head: 0; }
.theme-scroll { width: 5px; background: #ebebeb; padding-top: 91px; }
.theme-scroll i { display: block; height: 301px; border-radius: 4px 0 0 4px; background: #d5d5d5; }

/* status bar */
.status { display: flex; align-items: center; height: 40px; padding: 1px 31px 0 19px; border-top: 1px solid #dcdcdc; color: #111; flex: none; }
.status .tool > .wide { width: 28px; }
.pagesel { position: relative; width: 162px; margin-right: 21px; border-right: 1px solid #d0d0d0; height: 30px; }
.pagesel select { appearance: none; width: 100%; height: 30px; padding-left: 30px; font-size: 16px; }
.pagesel .caret { position: absolute; right: 6px; top: 11px; color: #777; }
.page { margin-right: 26px; font-weight: bold; font-size: 16px; }
.thick-icon { stroke-width: 2.5; }
.zoom { display: flex; align-items: center; margin-left: auto; gap: 6px; }
.zoom input { appearance: none; width: 102px; height: 14px; margin: 0 -3px; }
.zoom input::-webkit-slider-runnable-track { height: 4px; border-radius: 2px; background: linear-gradient(90deg, #b8b8b8 15%, #dcdcdc 15%); }
.zoom input::-webkit-slider-thumb { appearance: none; width: 14px; height: 14px; margin-top: -5px; border: 2px solid #b5b5b5; border-radius: 50%; background: #fff; }
.percent { display: flex; align-items: center; gap: 10px; padding: 0 14px 0 6px; font-size: 16px; }
.percent .caret { color: #777; }
```

FILE: app.js
```js
const NS = "http://www.w3.org/2000/svg";

function add(parent, name, attrs, text) {
  const el = document.createElementNS(NS, name);
  for (const key in attrs) el.setAttribute(key, attrs[key]);
  if (text !== undefined) el.textContent = text;
  parent.appendChild(el);
  return el;
}

const STEP = 42.5;
const rulerX = document.getElementById("ruler-x");
for (let i = 0; i < 16; i++) {
  const x = Math.round(11 + i * STEP) - 0.5;
  add(rulerX, "path", { d: `M${x} 0v21M${x + 21} 12v9` });
  add(rulerX, "text", { x: x + 2, y: 12 }, i * 20 - 20);
}

const rulerY = document.getElementById("ruler-y");
for (let i = 0; i < 15; i++) {
  const y = Math.round(16 + i * STEP) + 0.5;
  add(rulerY, "path", { d: `M0 ${y}h21M13 ${y + 21}h8` });
  add(rulerY, "text", { transform: `translate(13 ${y + 2}) rotate(-90)`, "text-anchor": "end" }, i * 20);
}

const colors = `b01320 cf1030 ee4466 fb6580 fc9cab 2d7f8c 38adc4 42c4dd 5cdcef a2f0ff
f55420 ff7d33 ff9517 ffb81a fec668 15917a 16b399 20cbb1 65dac8 80ecdc
9b2f5f c44b90 e264a9 f987c4 f6bcd6 5b8611 79a125 98bb2a b3d13c d4e08a
1d2bb0 3742dc 6a45f3 8e6bf6 af96fb ffcc00 ffdd2b ecea2f fbf444 fffd80
9c50e0 b84eea c470fb c388ff dba5fd 2c7f43 3ba055 50b577 62bf88 92d8aa
ec3725 fb4a39 fe5c5c ff7a76 ff928c 2542a3 2e5cd8 2f68f6 6189fc 8fb2fa
6e2d04 943806 a93f27 ce583a e57252 168bdc 27a0fa 42b1fe 3ccffd 69e0fe
774b33 995e40 b07050 d58660 f49a70 8c7f73 b1ae9b cccab8 e3decd f4eddc
1a1a1a 2d2d2d 464646 595959 7b7b7b b9b9b9 cbcbcb dadada e7e7e7`.split(/\s+/);
const swatches = document.getElementById("swatches");
for (const c of colors) {
  const el = document.createElement("i");
  el.style.background = "#" + c;
  swatches.appendChild(el);
}

/* Each frame is a list of bars: x, y, width, height, colour. */
const B = "#0db0f0", T = "#0a80b0", R = "#e34a4a", G = "#a0d35c", W = "#d8eefc";
const frames = [
  [[3,13,54,4,"#b9c4ee"],[5,11,5,7,"#8f9fe0"],[12,14,10,1,"#8a94b8"],[3,47,54,3,"#d9def5"],[47,43,5,6,"#9cadeb"],[53,44,3,4,"#cdd5f5"],[22,48,8,1,"#999"]],
  [[3,14,54,4,"#35b9f0"],[3,12,10,3,T],[8,15,46,2,"#7bccf3"],[3,48,54,3,"#35b9f0"],[27,49,8,1,W]],
  [[3,12,54,4,"#dadada"],[7,12,20,4,"#4f86dd"],[12,13,10,1,W],[3,48,54,3,"#d6d6d6"],[32,48,21,3,"#4f86dd"],[37,49,10,1,W]],
  [[3,12,54,4,"#a3c7ea"],[3,13,22,4,"#8fc3f8"],[54,12,3,6,"#7a78ab"],[3,48,54,3,"#96c2ea"],[3,44,3,6,"#7a78ab"],[29,49,7,1,"#6a88a5"]],
  [[3,13,54,3,B],[5,12,6,1,T],[26,14,12,1,W]],
  [[3,14,54,2,T],[37,12,10,2,"#6ec5ef"],[37,15,6,2,B],[15,13,10,1,"#aaa"]],
  [[3,12,54,4,B],[3,16,54,1,G],[5,14,17,2,W],[50,13,5,3,W]],
  [[3,12,54,4,B],[4,12,4,4,"#80cf60"],[23,14,10,1,W]],
  [[3,14,54,5,B],[3,14,22,5,"#ff8850"],[7,16,12,1,W]],
  [[3,13,54,4,T],[22,14,15,1,W]],
  [[3,13,54,2,"#dadada"],[18,13,24,3,"#999"],[24,13,12,1,W]],
  [[3,15,54,3,R],[3,12,54,1,"#ddd"],[24,15,12,1,W]],
  [[3,13,54,4,B],[15,15,12,1,W],[40,14,1,3,W]],
  [[3,13,54,4,R],[20,14,12,1,W],[50,14,1,2,W]],
  [[3,13,54,3,B],[25,14,12,1,W]],
  [[3,16,50,1,B],[23,14,8,1,"#bbb"],[52,14,2,2,"#ddd"]],
  [[3,13,54,3,B],[3,13,7,3,"#d04848"],[12,14,12,1,W]],
  [[3,15,54,1,"#8bb8e8"],[4,12,6,4,"#e4b9b9"],[52,13,4,3,"#efc77c"],[24,14,12,1,"#aaa"]],
  [[3,15,54,1,G],[5,13,6,3,"#80ba25"],[24,14,12,1,"#aaa"]],
  [[3,13,54,3,"#555"],[4,13,5,5,"#333"],[5,14,3,3,"#f4f4f4"],[24,13,12,1,"#ccc"]]
];
/* Lower bars of rows two to five. */
const lower = [
  [[43,49,14,2,B],[46,47,8,1,T]],
  [[3,48,54,1,T],[3,48,9,2,"#2f8fb8"]],
  [[3,49,54,2,G],[40,48,17,2,B],[5,45,4,4,"#50bde8"],[6,46,2,2,"#f4f4f4"]],
  [[3,49,54,2,B],[44,48,13,3,G]],
  [[3,49,54,2,"#ff8850"],[35,47,22,2,B]],
  [[3,48,54,3,T],[25,49,10,1,W]],
  [[3,49,54,1,"#dcdcdc"]],
  [[3,49,54,2,R],[25,49,10,1,W]],
  [[3,48,54,3,B],[25,49,10,1,W]],
  [[3,49,54,1,R]],
  [[3,49,54,2,B],[26,49,8,1,W]],
  [[3,49,54,2,B],[6,45,3,4,"#a8d8ee"],[47,49,8,1,W]],
  [[3,49,54,2,B],[50,49,7,2,"#d04848"],[26,49,8,1,W]],
  [[3,49,54,2,"#c8e6f7"],[50,49,7,2,"#8cb8df"]],
  [[3,49,54,3,G],[51,47,6,3,"#bfe28a"],[26,50,8,1,W]],
  [[39,49,18,3,"#555"],[42,49,11,1,"#ccc"]]
];
const grid = document.getElementById("frames");
frames.forEach((upper, i) => {
  const svg = add(grid, "svg", { viewBox: "0 0 60 60" });
  if (i === 3) svg.setAttribute("class", "picked");
  const bars = i < 4 ? upper : upper.concat(lower[i - 4]);
  for (const [x, y, width, height, fill] of bars) add(svg, "rect", { x, y, width, height, fill });
});
```
